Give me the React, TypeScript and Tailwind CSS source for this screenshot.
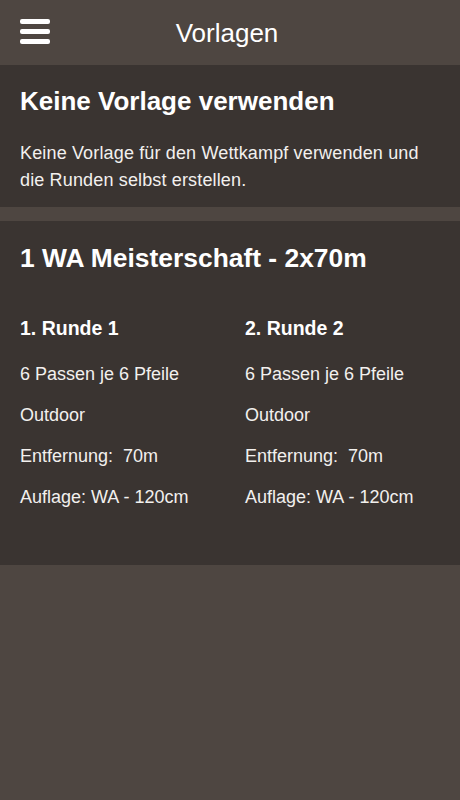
export default function App() {
  const rounds = [
    { title: "1. Runde 1" },
    { title: "2. Runde 2" },
  ];

  return (
    <div
      className="min-h-[800px] w-[460px] bg-[#4e4641] text-white"
      style={{ fontFamily: '"Liberation Sans", Arial, sans-serif' }}
    >
      {/* header */}
      <div className="relative flex h-[65px] items-center justify-center">
        <button className="absolute left-[20px] top-[19px] flex w-[30px] flex-col gap-[5px]">
          <span className="h-[5px] w-full rounded-[2px] bg-white" />
          <span className="h-[5px] w-full rounded-[2px] bg-white" />
          <span className="h-[5px] w-full rounded-[2px] bg-white" />
        </button>
        <h1 className="mr-[6px] text-[26px] leading-[30px] font-normal">Vorlagen</h1>
      </div>

      {/* no template */}
      <div className="bg-[#3a3431] px-[20px] pt-[21px] pb-[13px]">
        <h2 className="text-[26px] leading-[30px] font-bold">Keine Vorlage verwenden</h2>
        <p className="mt-[24px] text-[18px] leading-[27px] tracking-[0.15px] text-[#f2f0ee]">
          Keine Vorlage für den Wettkampf verwenden und die Runden selbst erstellen.
        </p>
      </div>

      {/* template */}
      <div className="mt-[14px] bg-[#3a3431] px-[20px] pt-[22px] pb-[47px]">
        <h2 className="text-[26.4px] leading-[30px] font-bold">1 WA Meisterschaft - 2x70m</h2>
        <div className="mt-[43px] grid grid-cols-[225px_1fr]">
          {rounds.map((r) => (
            <div key={r.title}>
              <h3 className="text-[19.5px] leading-[24px] font-bold">{r.title}</h3>
              <div className="mt-[14px] text-[18px] leading-[41px] text-[#f2f0ee]">
                <div>6 Passen je 6 Pfeile</div>
                <div>Outdoor</div>
                <div className="whitespace-pre">Entfernung:  70m</div>
                <div>Auflage: WA - 120cm</div>
              </div>
            </div>
          ))}
        </div>
      </div>
    </div>
  );
}
